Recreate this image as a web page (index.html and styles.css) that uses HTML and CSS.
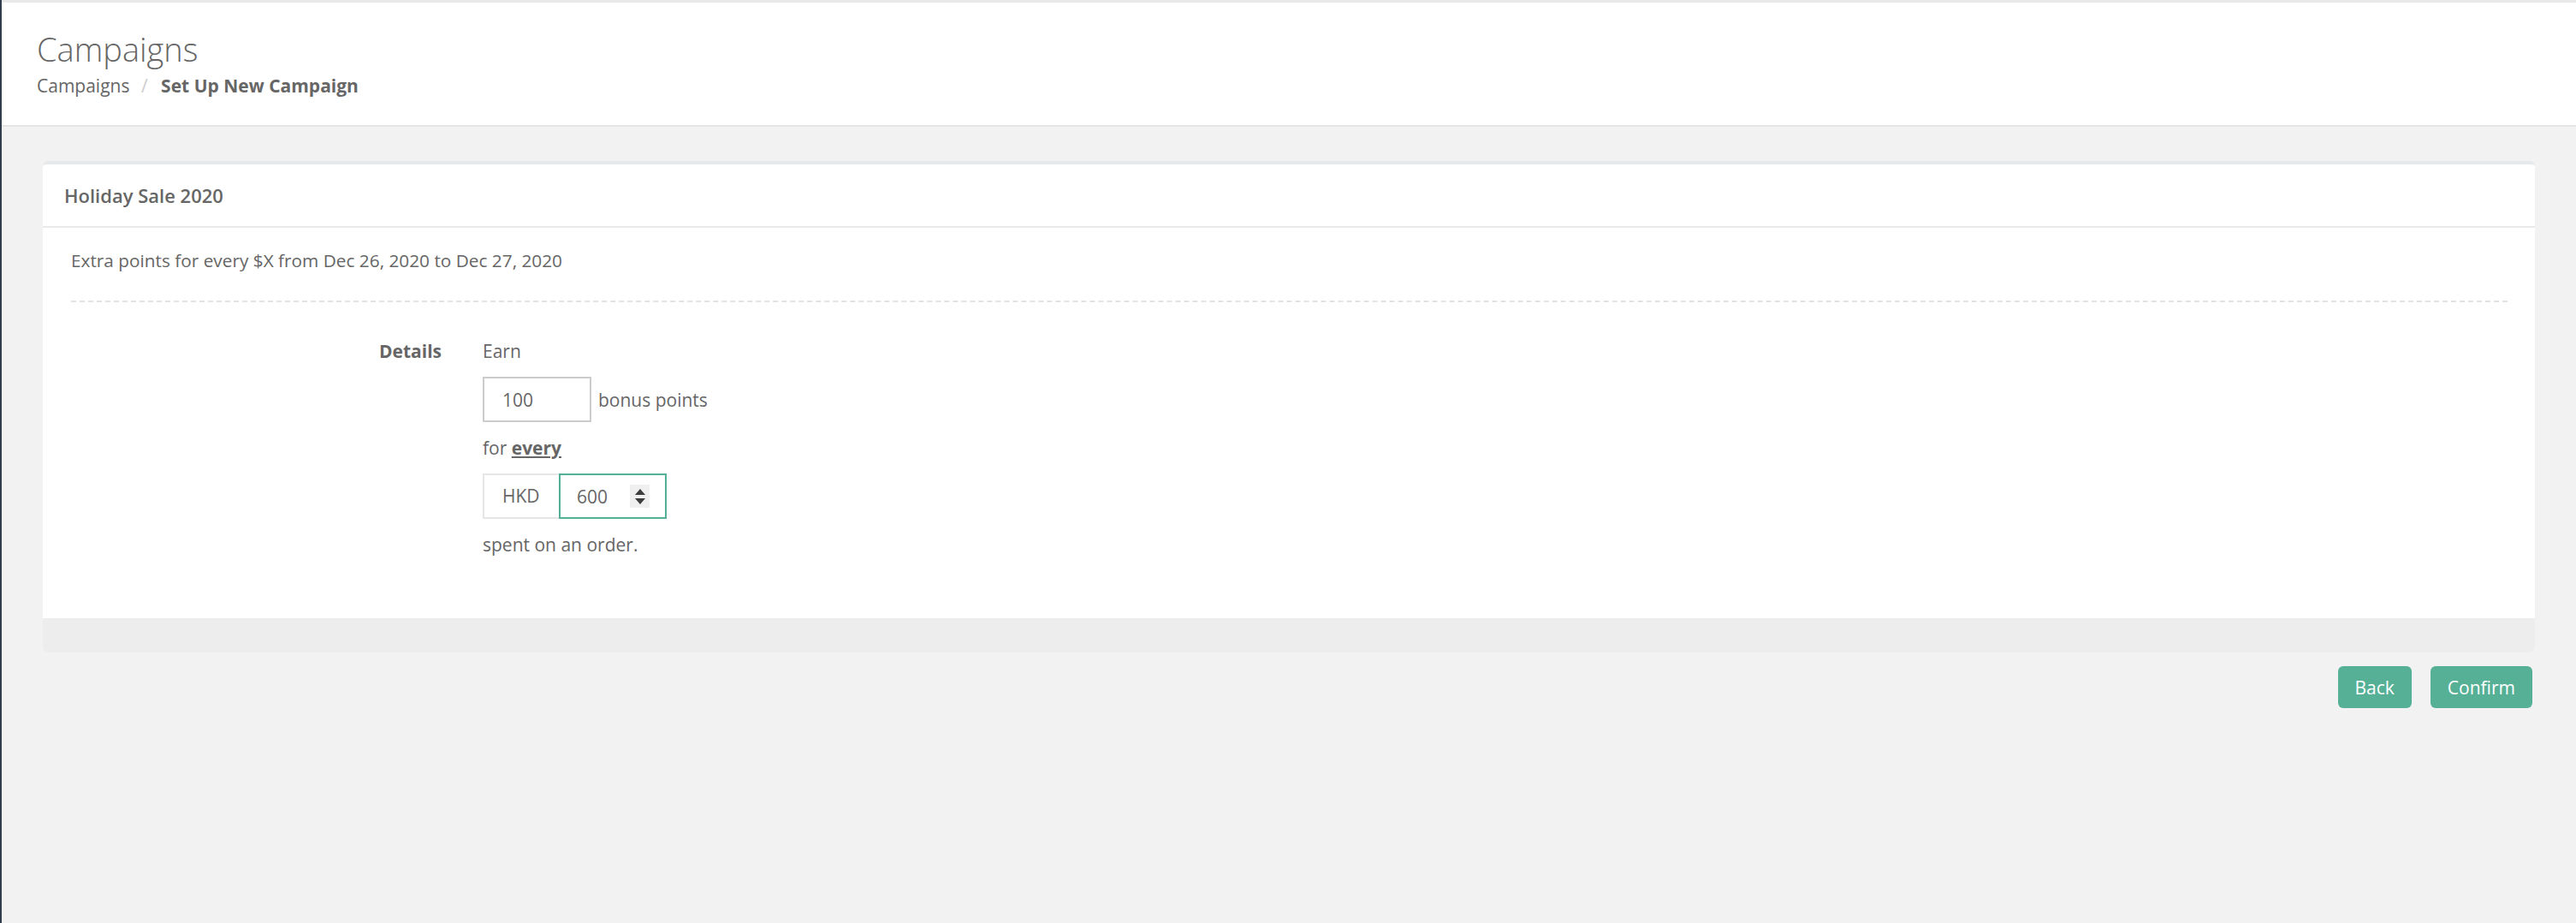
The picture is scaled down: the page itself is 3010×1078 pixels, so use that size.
FILE: index.html
```html
<!DOCTYPE html>
<html lang="en">
<head>
  <meta charset="UTF-8" />
  <meta name="viewport" content="width=device-width, initial-scale=1.0"/>
  <title>Campaigns - Set Up New Campaign</title>
  <link rel="stylesheet" href="styles.css">
</head>
<body>
  <header class="page-header">
    <h1>Campaigns</h1>
    <div class="breadcrumb">
      <a href="#">Campaigns</a>
      <span class="sep">/</span>
      <span class="current">Set Up New Campaign</span>
    </div>
  </header>

  <main class="content">
    <div class="panel">
      <div class="panel-heading">Holiday Sale 2020</div>
      <div class="panel-body">
        <p class="summary">Extra points for every $X from Dec 26, 2020 to Dec 27, 2020</p>
        <hr class="dashed">
        <div class="form-row">
          <label class="form-label">Details</label>
          <div class="form-field">
            <span>Earn</span>
            <div class="points-row">
              <input type="text" class="text-input" value="100">
              <span>bonus points</span>
            </div>
            <span>for <b class="every">every</b></span>
            <div class="input-group">
              <span class="addon">HKD</span>
              <div class="spin-field">
                <input type="text" class="spin-input" value="600">
                <span class="spinner">
                  <span class="arrow-up"></span>
                  <span class="arrow-down"></span>
                </span>
              </div>
            </div>
            <span>spent on an order.</span>
          </div>
        </div>
      </div>
      <div class="panel-footer"></div>
    </div>

    <div class="actions">
      <button class="btn">Back</button>
      <button class="btn">Confirm</button>
    </div>
  </main>
</body>
</html>
```

FILE: styles.css
```css
* {
  box-sizing: border-box;
}
body {
  margin: 0;
  min-height: 100vh;
  font-family: 'Open Sans', 'Liberation Sans', sans-serif;
  font-size: 21px;
  color: #666;
  background: #f2f2f2;
  border-left: 2px solid #2f3d4d;
}
.page-header {
  background: white;
  border-top: 3px solid #e9e9e9;
  border-bottom: 2px solid #e6e6e6;
  padding: 31px 41px 31px;
}
.page-header h1 {
  margin: 0;
  font-size: 38px;
  font-weight: 300;
  line-height: 46px;
  color: #666;
}
.breadcrumb {
  margin-top: 5px;
  line-height: 30px;
}
.breadcrumb a {
  color: #666;
  text-decoration: none;
}
.breadcrumb .sep {
  color: #ccc;
  margin: 0 10px 0 8px;
}
.breadcrumb .current {
  font-weight: 700;
}
.content {
  padding: 40px 48px 40px 48px;
}
.panel {
  background: white;
  border-top: 4px solid #e7e8ea;
  border-radius: 6px;
  overflow: hidden;
}
.panel-heading {
  height: 74px;
  line-height: 72px;
  padding: 0 25px;
  font-size: 22px;
  font-weight: 600;
  border-bottom: 2px solid #e9e9e9;
}
.panel-body {
  padding: 23px 32px 71px 33px;
}
.summary {
  margin: 0;
  line-height: 30px;
  font-size: 20.8px;
}
hr.dashed {
  margin: 32px 0 0;
  height: 0;
  border: 0;
  border-top: 2px dashed #e3e3e3;
}
.form-row {
  display: flex;
  margin-top: 42px;
}
.form-label {
  width: 433px;
  margin-right: 48px;
  text-align: right;
  font-weight: 700;
  line-height: 30px;
}
.form-field {
  display: flex;
  flex-direction: column;
  align-items: flex-start;
  gap: 15px;
  line-height: 30px;
}
.points-row {
  display: flex;
  align-items: center;
  gap: 8px;
}
.text-input {
  width: 127px;
  height: 53px;
  border: 2px solid #ccc;
  border-radius: 0;
  padding: 0 21px;
  font: inherit;
  color: #666;
  outline: none;
}
.every {
  text-decoration: underline;
}
.input-group {
  display: flex;
}
.addon {
  width: 89px;
  height: 53px;
  line-height: 49px;
  padding-left: 21px;
  border: 2px solid #e6e6e6;
  border-right: none;
}
.spin-field {
  display: flex;
  align-items: center;
  width: 126px;
  height: 53px;
  border: 2px solid #52b095;
  padding: 0 18px 0 19px;
}
.spin-input {
  width: 50px;
  border: none;
  padding: 0;
  font: inherit;
  color: #666;
  outline: none;
}
.spinner {
  margin-left: auto;
  width: 23px;
  height: 27px;
  background: #efefef;
  display: flex;
  flex-direction: column;
  align-items: center;
  justify-content: center;
  gap: 4px;
}
.arrow-up {
  width: 0;
  height: 0;
  border-left: 6px solid transparent;
  border-right: 6px solid transparent;
  border-bottom: 7px solid #3c3c3c;
}
.arrow-down {
  width: 0;
  height: 0;
  border-left: 6px solid transparent;
  border-right: 6px solid transparent;
  border-top: 7px solid #3c3c3c;
}
.panel-footer {
  height: 40px;
  background: #ededed;
}
.actions {
  display: flex;
  justify-content: flex-end;
  gap: 22px;
  margin-top: 16px;
  padding-right: 3px;
}
.btn {
  height: 49px;
  padding: 0 20px;
  font-family: inherit;
  font-size: 21px;
  color: white;
  background: #55b096;
  border: none;
  border-radius: 6px;
  cursor: pointer;
}
```
